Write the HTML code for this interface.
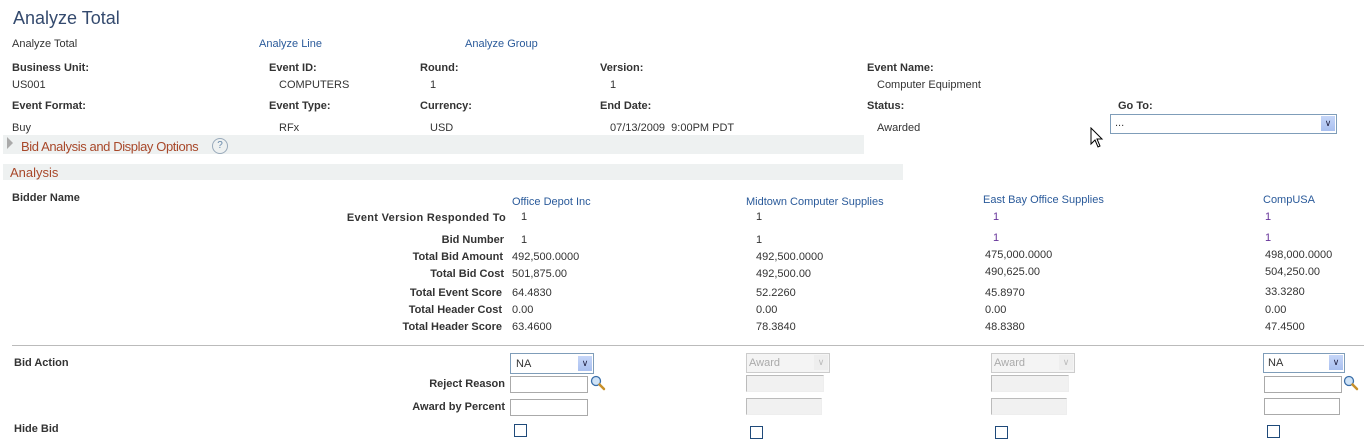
<!DOCTYPE html><html><head><style>
body{margin:0;width:1364px;height:444px;background:#fff;font-family:"Liberation Sans",Arial,sans-serif;font-size:11px;color:#333;position:relative;overflow:hidden}
div,span{position:absolute;white-space:nowrap}
.b{font-weight:bold;color:#333}
.l{color:#2a5a9a}
.r{text-align:right}
.p{color:#663399}
.sel{border:1px solid #7f9db9;height:19px;background:#fff;box-sizing:border-box}
.sel i{position:absolute;right:1px;top:1px;width:14px;height:15px;background:linear-gradient(#c6d6f8,#a9c0f0);font-style:normal;font-size:9px;color:#224;text-align:center;line-height:15px}
.dis{border:1px solid #ccc;background:#f4f4f4;color:#aaa}
.dis i{background:#eee;color:#bbb}
.in{border:1px solid #aaa;background:#fff;height:17px;width:76px;box-sizing:border-box}
.ind{border:1px solid #bbb;border-bottom-color:#eee;border-right-color:#eee;background:#f1f1f1;height:17px;width:76px;box-sizing:border-box}
.cb{width:11px;height:11px;border:1px solid #1f4a7a;background:#fff}
</style></head><body>
<div style="left:13px;top:8px;font-size:18px;color:#344a6e">Analyze Total</div>
<div style="left:12px;top:38px">Analyze Total</div>
<div class="l" style="left:259px;top:38px">Analyze Line</div>
<div class="l" style="left:465px;top:38px">Analyze Group</div>

<div class="b" style="left:12px;top:62px">Business Unit:</div>
<div class="b" style="left:269px;top:62px">Event ID:</div>
<div class="b" style="left:420px;top:62px">Round:</div>
<div class="b" style="left:600px;top:62px">Version:</div>
<div class="b" style="left:867px;top:62px">Event Name:</div>
<div style="left:12px;top:79px">US001</div>
<div style="left:279px;top:79px">COMPUTERS</div>
<div style="left:430px;top:79px">1</div>
<div style="left:610px;top:79px">1</div>
<div style="left:877px;top:79px">Computer Equipment</div>

<div class="b" style="left:12px;top:100px">Event Format:</div>
<div class="b" style="left:269px;top:100px">Event Type:</div>
<div class="b" style="left:420px;top:100px">Currency:</div>
<div class="b" style="left:600px;top:100px">End Date:</div>
<div class="b" style="left:867px;top:100px">Status:</div>
<div class="b" style="left:1118px;top:100px">Go To:</div>
<div style="left:12px;top:122px">Buy</div>
<div style="left:279px;top:122px">RFx</div>
<div style="left:430px;top:122px">USD</div>
<div style="left:610px;top:122px">07/13/2009&nbsp; 9:00PM PDT</div>
<div style="left:877px;top:122px">Awarded</div>
<div class="sel" style="left:1110px;top:114px;width:227px;height:20px"><span style="left:4px;top:2px">...</span><i>&#8744;</i></div>
<svg style="position:absolute;left:1090px;top:127px" width="14" height="22" viewBox="0 0 14 22"><path d="M1 1 L1 17 L5 13 L8 20 L10 19 L7 12 L12 12 Z" fill="#fff" stroke="#000" stroke-width="1"/></svg>

<div style="left:3px;top:135px;width:861px;height:19px;background:#eef1f1"></div>
<div style="left:7px;top:137px;width:0;height:0;border-left:6px solid #aaa;border-top:6px solid transparent;border-bottom:6px solid transparent"></div>
<div style="left:21px;top:139px;font-size:13px;color:#a8482a;letter-spacing:-0.4px">Bid Analysis and Display Options</div>
<div style="left:212px;top:138px;width:14px;height:14px;border:1px solid #9ab;border-radius:50%;color:#68a;font-size:10px;text-align:center;line-height:14px">?</div>

<div style="left:3px;top:164px;width:900px;height:16px;background:#eef1f1"></div>
<div style="left:10px;top:165px;font-size:13px;color:#a8482a">Analysis</div>

<div class="b" style="left:12px;top:192px">Bidder Name</div>
<div class="l" style="left:512px;top:196px">Office Depot Inc</div>
<div class="l" style="left:746px;top:196px">Midtown Computer Supplies</div>
<div class="l" style="left:983px;top:194px">East Bay Office Supplies</div>
<div class="l" style="left:1263px;top:194px">CompUSA</div>

<div class="b r" style="right:858px;top:212px;letter-spacing:0.3px">Event Version Responded To</div>
<div class="b r" style="right:860px;top:234px">Bid Number</div>
<div class="b r" style="right:861px;top:251px">Total Bid Amount</div>
<div class="b r" style="right:860px;top:268px">Total Bid Cost</div>
<div class="b r" style="right:862px;top:287px">Total Event Score</div>
<div class="b r" style="right:862px;top:304px">Total Header Cost</div>
<div class="b r" style="right:862px;top:321px">Total Header Score</div>

<div style="left:521px;top:211px">1</div><div style="left:756px;top:211px">1</div><div class="p" style="left:993px;top:211px">1</div><div class="p" style="left:1265px;top:211px">1</div>
<div style="left:521px;top:234px">1</div><div style="left:756px;top:234px">1</div><div class="p" style="left:993px;top:232px">1</div><div class="p" style="left:1265px;top:232px">1</div>
<div style="left:512px;top:251px">492,500.0000</div><div style="left:756px;top:251px">492,500.0000</div><div style="left:985px;top:249px">475,000.0000</div><div style="left:1265px;top:249px">498,000.0000</div>
<div style="left:512px;top:268px">501,875.00</div><div style="left:756px;top:268px">492,500.00</div><div style="left:985px;top:266px">490,625.00</div><div style="left:1265px;top:266px">504,250.00</div>
<div style="left:512px;top:287px">64.4830</div><div style="left:756px;top:287px">52.2260</div><div style="left:985px;top:287px">45.8970</div><div style="left:1265px;top:286px">33.3280</div>
<div style="left:512px;top:304px">0.00</div><div style="left:756px;top:304px">0.00</div><div style="left:985px;top:304px">0.00</div><div style="left:1265px;top:304px">0.00</div>
<div style="left:512px;top:321px">63.4600</div><div style="left:756px;top:321px">78.3840</div><div style="left:985px;top:321px">48.8380</div><div style="left:1265px;top:321px">47.4500</div>

<div style="left:12px;top:345px;width:1352px;height:1px;background:#bbb"></div>

<div class="b" style="left:14px;top:357px">Bid Action</div>
<div class="sel" style="left:510px;top:353px;width:84px;height:21px"><span style="left:5px;top:4px">NA</span><i style="top:2px">&#8744;</i></div>
<div class="sel dis" style="left:746px;top:353px;width:84px;height:20px"><span style="left:2px;top:3px">Award</span><i>&#8744;</i></div>
<div class="sel dis" style="left:991px;top:353px;width:84px;height:20px"><span style="left:2px;top:3px">Award</span><i>&#8744;</i></div>
<div class="sel" style="left:1263px;top:353px;width:82px;height:20px"><span style="left:4px;top:3px">NA</span><i>&#8744;</i></div>

<div class="b r" style="right:859px;top:378px">Reject Reason</div>
<div class="in" style="left:510px;top:376px;width:78px"></div>
<svg style="position:absolute;left:590px;top:375px" width="16" height="16" viewBox="0 0 16 16"><circle cx="6" cy="6" r="4.5" fill="#cfe3f7" stroke="#3a6ea8" stroke-width="1.3"/><path d="M9.5 9.5 L14 14" stroke="#c8902a" stroke-width="2.5" stroke-linecap="round"/></svg>
<div class="ind" style="left:746px;top:375px;width:78px"></div>
<div class="ind" style="left:991px;top:375px;width:78px"></div>
<div class="in" style="left:1264px;top:376px;width:78px"></div>
<svg style="position:absolute;left:1343px;top:375px" width="16" height="16" viewBox="0 0 16 16"><circle cx="6" cy="6" r="4.5" fill="#cfe3f7" stroke="#3a6ea8" stroke-width="1.3"/><path d="M9.5 9.5 L14 14" stroke="#c8902a" stroke-width="2.5" stroke-linecap="round"/></svg>

<div class="b r" style="right:859px;top:401px">Award by Percent</div>
<div class="in" style="left:510px;top:399px;width:78px"></div>
<div class="ind" style="left:746px;top:398px"></div>
<div class="ind" style="left:991px;top:398px"></div>
<div class="in" style="left:1264px;top:398px;width:76px"></div>

<div class="b" style="left:14px;top:423px">Hide Bid</div>
<div class="cb" style="left:514px;top:424px"></div>
<div class="cb" style="left:750px;top:426px"></div>
<div class="cb" style="left:995px;top:426px"></div>
<div class="cb" style="left:1267px;top:425px"></div>
</body></html>
